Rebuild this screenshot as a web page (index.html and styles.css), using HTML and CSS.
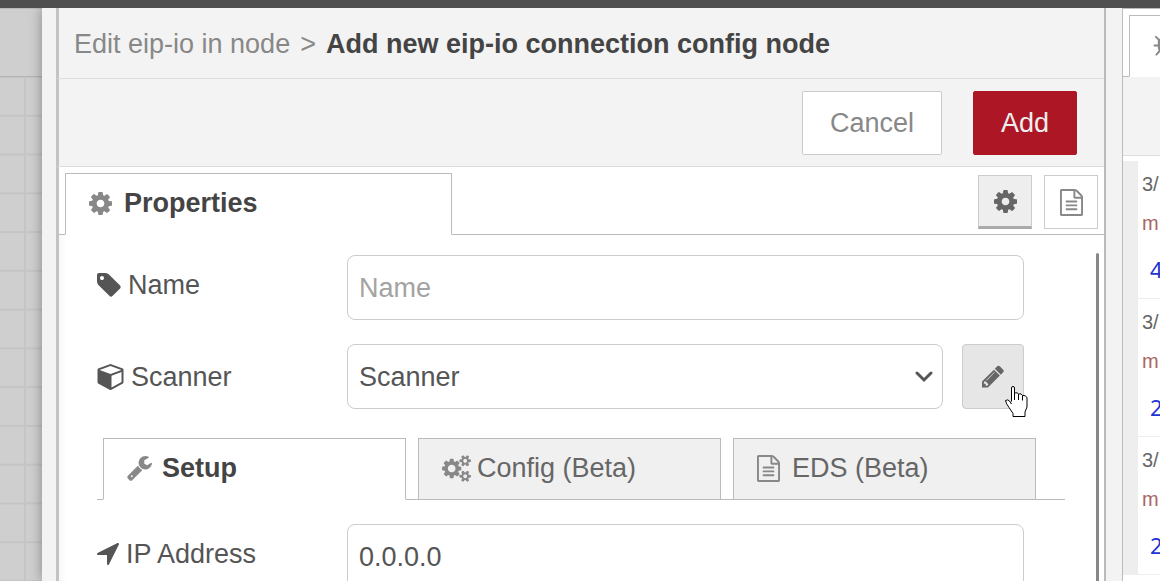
FILE: index.html
```html
<!DOCTYPE html>
<html lang="en">
<head>
  <meta charset="UTF-8">
  <meta name="viewport" content="width=device-width, initial-scale=1.0">
  <title>Add new eip-io connection config node</title>
  <link rel="stylesheet" href="styles.css">
</head>
<body>
  <!-- shared icons -->
  <svg class="sprite" aria-hidden="true">
    <symbol id="cog" viewBox="128 0 1536 1792"><path d="M1152 896q0-106-75-181t-181-75-181 75-75 181 75 181 181 75 181-75 75-181zm512-109v222q0 12-8 23t-20 13l-185 28q-19 54-39 91 35 50 107 138 10 12 10 25t-9 23q-27 37-99 108t-94 71q-12 0-26-9l-138-108q-44 23-91 38-16 136-29 186-7 28-36 28h-222q-14 0-24.5-8.5t-11.5-21.5l-28-184q-49-16-90-37l-141 107q-10 9-25 9-14 0-25-11-126-114-165-168-7-10-7-23 0-12 8-23 15-21 51-66.5t54-70.5q-27-50-41-99l-183-27q-13-2-21-12.5t-8-23.5v-222q0-12 8-23t19-13l186-28q14-46 39-92-40-57-107-138-10-12-10-24 0-10 9-23 26-36 98.5-107.5t94.5-71.5q13 0 26 10l138 107q44-23 91-38 16-136 29-186 7-28 36-28h222q14 0 24.5 8.5t11.5 21.5l28 184q49 16 90 37l142-107q9-9 24-9 13 0 25 10 129 119 165 170 7 8 7 22 0 12-8 23-15 21-51 66.5t-54 70.5q26 50 41 98l183 28q13 2 21 12.5t8 23.5z"/></symbol>
    <symbol id="file" viewBox="128 0 1536 1792"><path d="M1596 380q28 28 48 76t20 88v1152q0 40-28 68t-68 28h-1344q-40 0-68-28t-28-68v-1600q0-40 28-68t68-28h896q40 0 88 20t76 48zm-444-244v376h376q-10-29-22-41l-313-313q-12-12-41-22zm384 1528v-1024h-416q-40 0-68-28t-28-68v-416h-768v1536h1280zm-1024-864q0-14 9-23t23-9h704q14 0 23 9t9 23v64q0 14-9 23t-23 9h-704q-14 0-23-9t-9-23v-64zm736 224q14 0 23 9t9 23v64q0 14-9 23t-23 9h-704q-14 0-23-9t-9-23v-64q0-14 9-23t23-9h704zm0 256q14 0 23 9t9 23v64q0 14-9 23t-23 9h-704q-14 0-23-9t-9-23v-64q0-14 9-23t23-9h704z"/></symbol>
  </svg>

  <header class="topbar"></header>
  <div class="editor">
    <div class="workspace">
      <div class="workspace-tabs"></div>
      <div class="workspace-grid"></div>
    </div>

    <main class="tray">
      <h1 class="tray-title"><a href="#">Edit eip-io in node</a><span class="crumb-sep">&gt;</span>Add new eip-io connection config node</h1>
      <div class="tray-toolbar">
        <button class="btn" type="button">Cancel</button>
        <button class="btn btn-primary" type="button">Add</button>
      </div>
      <div class="tray-tabs">
        <button class="tab tab-active tab-properties" type="button"><span class="tab-icon"><svg class="icon"><use href="#cog"/></svg></span>Properties</button>
        <div class="tray-tools">
          <button class="tool tool-active" type="button" aria-label="Properties"><svg class="icon"><use href="#cog"/></svg></button>
          <button class="tool" type="button" aria-label="Description"><svg class="icon"><use href="#file"/></svg></button>
        </div>
      </div>

      <div class="tray-body">
        <form class="form">
          <div class="row">
            <label class="label label-input" for="name"><svg class="icon-label" viewBox="128 128 1536 1536"><path d="M576 448q0-53-37.5-90.5t-90.5-37.5-90.5 37.5-37.5 90.5 37.5 90.5 90.5 37.5 90.5-37.5 37.5-90.5zm1067 576q0 53-37 90l-491 492q-39 37-91 37-53 0-90-37l-715-716q-38-37-64.5-101t-26.5-117v-416q0-52 38-90t90-38h416q53 0 117 26.5t102 64.5l715 714q37 39 37 91z"/></svg>Name</label>
            <input class="field" id="name" type="text" placeholder="Name">
          </div>
          <div class="row">
            <label class="label" for="scanner"><svg class="icon-label icon-cube" viewBox="0 64 1664 1728"><path d="M896 1629l640-349v-636l-640 233v752zm-64-865l698-254-698-254-698 254zm832-252v768q0 35-18 65t-49 47l-704 384q-28 16-61 16t-61-16l-704-384q-31-17-49-47t-18-65v-768q0-40 23-73t61-47l704-256q22-8 44-8t44 8l704 256q38 14 61 47t23 73z"/></svg>Scanner</label>
            <div class="select">
              <select class="field" id="scanner"><option>Scanner</option></select>
              <svg class="chevron" viewBox="0 0 18 12"><path d="M2 2l7 7 7-7"/></svg>
            </div>
            <button class="edit" type="button" aria-label="Edit scanner">
              <svg class="icon" viewBox="128 128 1536 1536"><path d="M491 1536l91-91-235-235-91 91v107h128v128h107zm523-928q0-22-22-22-10 0-17 7l-542 542q-7 7-7 17 0 22 22 22 10 0 17-7l542-542q7-7 7-17zm-54-192l416 416-832 832h-416v-416zm683 96q0 53-37 90l-166 166-416-416 166-165q36-38 90-38 53 0 91 38l235 234q37 39 37 91z"/></svg>
              <svg class="pointer" viewBox="0 0 23 32"><path d="M6.500 15.500V2q0-1.500 1.500-1.500t1.500 1.500v5q3-1 4 1q3-1 4 1.500q3-.5 4.500 2v9.500l-2 5v4.500h-12v-3l-4-6q-3-4-3.500-7q2.500-1.500 4 .5l2 3M9.500 7v7M13.500 8v6M17.500 9.500v5"/></svg>
            </button>
          </div>
          <div class="form-tabs">
            <button class="tab tab-active" type="button"><span class="tab-icon"><svg class="icon icon-wrench" viewBox="64 128 1664 1664"><path d="M448 1472q0-26-19-45t-45-19-45 19-19 45 19 45 45 19 45-19 19-45zm644-420l-682 682q-37 37-90 37-52 0-91-37l-106-108q-38-36-38-90 0-53 38-91l681-681q39 98 114.500 173.500t173.500 114.500zm634-435q0 39-23 106-47 134-164.500 217.500t-258.500 83.500q-185 0-316.500-131.500t-131.500-316.500 131.500-316.500 316.500-131.500q58 0 121.500 16.500t107.500 46.500q16 11 16 28t-16 28l-293 169v224l193 107q5-3 79-48.500t135.500-81 70.500-35.500q15 0 23.500 10t8.500 25z"/></svg></span>Setup</button>
            <button class="tab" type="button"><span class="tab-icon"><svg class="icon icon-cogs" viewBox="0 0 1920 1792"><path d="M896 896q0-106-75-181t-181-75-181 75-75 181 75 181 181 75 181-75 75-181zm768 512q0-52-38-90t-90-38-90 38-38 90q0 53 37.500 90.500t90.500 37.500 90.500-37.500 37.500-90.500zm0-1024q0-52-38-90t-90-38-90 38-38 90q0 53 37.500 90.500t90.500 37.500 90.500-37.500 37.500-90.500zm-384 421v185q0 10-7 19.500t-16 10.500l-155 24q-11 35-32 76 34 48 90 115 7 11 7 20 0 12-7 19-23 30-82.500 89.500t-78.500 59.500q-11 0-21-7l-115-90q-37 19-77 31-11 108-23 155-7 24-30 24h-186q-11 0-20-7.500t-10-17.500l-23-153q-34-10-75-31l-118 89q-7 7-20 7-11 0-21-8-144-133-144-160 0-9 7-19 10-14 41-53t47-61q-23-44-35-82l-152-24q-10-1-17-9.500t-7-19.500v-185q0-10 7-19.500t16-10.500l155-24q11-35 32-76-34-48-90-115-7-11-7-20 0-12 7-20 22-30 82-89t79-59q11 0 21 7l115 90q34-18 77-32 11-108 23-154 7-24 30-24h186q11 0 20 7.500t10 17.500l23 153q34 10 75 31l118-89q8-7 20-7 11 0 21 8 144 133 144 160 0 8-7 19-12 16-42 54t-45 60q23 48 34 82l152 23q10 2 17 10.500t7 19.500zm640 533v140q0 16-149 31-12 27-30 52 51 113 51 138 0 4-4 7-122 71-124 71-8 0-46-47t-52-68q-20 2-30 2t-30-2q-14 21-52 68t-46 47q-2 0-124-71-4-3-4-7 0-25 51-138-18-25-30-52-149-15-149-31v-140q0-16 149-31 13-29 30-52-51-113-51-138 0-4 4-7 4-2 35-20t59-34 30-16q8 0 46 46.500t52 67.500q20-2 30-2t30 2q51-71 92-112l6-2q4 0 124 70 4 3 4 7 0 25-51 138 17 23 30 52 149 15 149 31zm0-1024v140q0 16-149 31-12 27-30 52 51 113 51 138 0 4-4 7-122 71-124 71-8 0-46-47t-52-68q-20 2-30 2t-30-2q-14 21-52 68t-46 47q-2 0-124-71-4-3-4-7 0-25 51-138-18-25-30-52-149-15-149-31v-140q0-16 149-31 13-29 30-52-51-113-51-138 0-4 4-7 4-2 35-20t59-34 30-16q8 0 46 46.500t52 67.500q20-2 30-2t30 2q51-71 92-112l6-2q4 0 124 70 4 3 4 7 0 25-51 138 17 23 30 52 149 15 149 31z"/></svg></span>Config (Beta)</button>
            <button class="tab" type="button"><span class="tab-icon"><svg class="icon"><use href="#file"/></svg></span>EDS (Beta)</button>
          </div>
          <div class="row">
            <label class="label label-input" for="address"><svg class="icon-label icon-arrow" viewBox="192 256 1408 1408"><path d="M1593 349l-640 1280q-17 35-57 35-5 0-15-2-22-5-35.500-22.500t-13.500-39.500v-576h-576q-22 0-39.500-13.500t-22.500-35.500 4-42 29-30l1280-640q13-7 29-7 27 0 45 19 15 14 18.500 34.500t-6.500 39.500z"/></svg>IP Address</label>
            <input class="field" id="address" type="text" value="0.0.0.0">
          </div>
        </form>
        <div class="scrollbar"></div>
      </div>
    </main>

    <div class="separator"></div>

    <aside class="sidebar">
      <div class="sidebar-tabs">
        <button class="sidebar-tab" type="button" aria-label="Debug"><svg class="icon-bug" viewBox="64 0 1664 1792"><path d="M1696 960q0 26-19 45t-45 19h-224q0 171-67 290l208 209q19 19 19 45t-19 45q-18 19-45 19t-45-19l-198-197q-5 5-15 13t-42 28.500-65 36.500-82 29-97 13v-896h-128v896q-51 0-101.500-13.500t-87-33-66-39-43.500-32.500l-15-14-183 207q-20 21-48 21-24 0-43-16-19-18-20.500-44.500t15.500-46.500l202-227q-58-114-58-274h-224q-26 0-45-19t-19-45 19-45 45-19h224v-294l-173-173q-19-19-19-45t19-45 45-19 45 19l173 173h844l173-173q19-19 45-19t45 19 19 45-19 45l-173 173v294h224q26 0 45 19t19 45zm-480-576h-640q0-133 93.500-226.500t226.500-93.500 226.500 93.500 93.500 226.500z"/></svg></button>
      </div>
      <div class="sidebar-toolbar"></div>
      <div class="messages">
        <div class="message"><div class="date">3/</div><div class="topic">m</div><div class="value">4</div></div>
        <div class="message"><div class="date">3/</div><div class="topic">m</div><div class="value">2</div></div>
        <div class="message"><div class="date">3/</div><div class="topic">m</div><div class="value">2</div></div>
      </div>
    </aside>
  </div>
</body>
</html>
```
FILE: styles.css
```css
*, *::before, *::after {
  box-sizing: border-box;
}

body {
  margin: 0;
  height: 100vh;
  display: flex;
  flex-direction: column;
  overflow: hidden;
  background: #fff;
  color: #555;
  font: 27px/32px "Liberation Sans", Arial, sans-serif;
}

button, input, select {
  margin: 0;
  font: inherit;
  color: inherit;
}

svg {
  display: block;
  flex: none;
  fill: currentColor;
}

.sprite {
  position: absolute;
  width: 0;
  height: 0;
}

.topbar {
  flex: none;
  height: 8px;
  background: #4f4f4f;
}

.editor {
  flex: 1;
  min-height: 0;
  display: flex;
}

/* dimmed flow canvas */
.workspace {
  flex: none;
  width: 42px;
  display: flex;
  flex-direction: column;
  background: #cfcfcf;
}

.workspace-tabs {
  height: 69px;
  border-top: 1px solid #bbb;
  border-bottom: 1px solid #b4b4b4;
}

.workspace-grid {
  flex: 1;
  background-image:
    linear-gradient(to left, #c5c5c5 2px, transparent 2px),
    linear-gradient(to top, #c5c5c5 2px, transparent 2px);
  background-position: 0 0, 0 1px;
  background-size: 26px 100%, 100% calc(100% / 13);
  background-repeat: no-repeat, repeat;
}

/* tray */
.tray {
  position: relative;
  flex: 1;
  min-width: 0;
  display: flex;
  flex-direction: column;
  border-left: 14px solid #f3f3f3;
  border-right: 2px solid #bbb;
  box-shadow: 0 0 12px rgba(0, 0, 0, 0.35);
  clip-path: inset(0 0 0 -16px);
}

.tray > * {
  border-left: 3px solid #c3c3c3;
}

.tray-title {
  flex: none;
  height: 71px;
  margin: 0;
  padding: 20px 15px 18px;
  border-bottom: 1px solid #ddd;
  background: #f3f3f3;
  color: #444;
  font-size: 27px;
  white-space: nowrap;
}

.tray-title a {
  color: #888;
  font-weight: normal;
  text-decoration: none;
}

.crumb-sep {
  margin: 0 10px;
  color: #888;
  font-weight: normal;
}

.tray-toolbar {
  flex: none;
  display: flex;
  justify-content: flex-end;
  gap: 31px;
  padding: 12px 27px 11px;
  border-bottom: 1px solid #ddd;
  background: #f3f3f3;
}

.btn {
  height: 64px;
  padding: 0 27px;
  border: 1px solid #ccc;
  border-radius: 2px;
  background: #fff;
  color: #888;
}

.btn-primary {
  border-color: #ad1625;
  background: #ad1625;
  color: #eee;
}

.tray-tabs, .form-tabs {
  display: flex;
  box-shadow: inset 0 -1px #bbb;
}

.tray-tabs {
  flex: none;
  align-items: flex-end;
  justify-content: space-between;
  height: 68px;
  padding: 0 6px;
  background-color: #fff;
}

.tab {
  display: flex;
  align-items: center;
  height: 62px;
  padding: 0 23px 2px;
  border: 1px solid #bbb;
  background: #f0f0f0;
  color: #666;
  white-space: nowrap;
}

.tab-active {
  border-bottom-color: #fff;
  background: #fff;
  color: #444;
  font-weight: bold;
}

.tab-properties {
  width: 387px;
}

.tab-icon {
  flex: none;
  width: 35px;
  color: #888;
}

.icon {
  width: 23px;
  height: 27px;
}

.icon-cogs {
  width: 29px;
}

.icon-wrench {
  width: 25px;
}

.tray-tools {
  display: flex;
  gap: 12px;
  margin-bottom: 6px;
}

.tool {
  width: 54px;
  height: 54px;
  display: grid;
  place-items: center;
  padding: 0;
  border: 1px solid #ccc;
  background: #fff;
  color: #888;
}

.tool-active {
  border-bottom: 3px solid #aaa;
  background: #eee;
  color: #666;
}

.tray-body {
  flex: 1;
  min-height: 0;
  display: flex;
  background: linear-gradient(to right, #f8f8f8, #fff 8px);
}

.form {
  flex: 1;
  min-width: 0;
  padding: 20px 31px 0 38px;
}

.row {
  display: flex;
  margin: 0 41px 24px 0;
}

.label {
  flex: none;
  width: 250px;
  display: flex;
  align-items: center;
  gap: 7px;
}

.label-input {
  padding-bottom: 6px;
}

.icon-label {
  width: 24px;
  height: 24px;
}

.icon-cube {
  width: 27px;
  height: 27px;
}

.icon-arrow {
  width: 22px;
  height: 22px;
}

.field {
  flex: 1;
  width: 100%;
  min-width: 0;
  height: 65px;
  padding: 1px 11px 0;
  border: 1px solid #ccc;
  border-radius: 8px;
  background: #fff;
  appearance: none;
}

.field::placeholder {
  color: #a3a3a3;
}

.select {
  position: relative;
  flex: 1;
}

.chevron {
  position: absolute;
  top: 27px;
  right: 10px;
  width: 18px;
  height: 12px;
  fill: none;
  stroke: #555;
  stroke-width: 3;
  stroke-linecap: round;
  pointer-events: none;
}

.edit {
  position: relative;
  width: 62px;
  height: 65px;
  display: grid;
  place-items: center;
  margin-left: 19px;
  padding: 0;
  border: 1px solid #ccc;
  border-radius: 4px;
  background: #e6e6e6;
  color: #666;
}

.edit .icon {
  width: 22px;
}

.pointer {
  position: absolute;
  right: -5px;
  bottom: -10px;
  width: 23px;
  height: 32px;
  fill: #fff;
  stroke: #000;
}

.form-tabs {
  gap: 12px;
  margin: 29px 0 24px;
  padding: 0 29px 0 6px;
}

.form-tabs .tab {
  flex: 1;
}

.scrollbar {
  flex: none;
  width: 3px;
  margin: 18px 5px 0 0;
  border-radius: 2px 2px 0 0;
  background: #888;
}

.separator {
  flex: none;
  width: 16px;
  background: #f3f3f3;
}

/* sidebar, cut off by the window */
.sidebar {
  flex: none;
  width: 38px;
  border-left: 1px solid #bbb;
  border-top: 1px solid #bbb;
  overflow: hidden;
}

.sidebar-tabs {
  display: flex;
  height: 68px;
  padding: 6px 0 0 6px;
  box-shadow: inset 0 -1px #bbb;
}

.sidebar-tab {
  flex: none;
  width: 120px;
  padding: 0 0 4px 23px;
  border: 1px solid #bbb;
  border-bottom-color: #fff;
  background: #fff;
  color: #888;
}

.icon-bug {
  width: 25px;
  height: 27px;
}

.sidebar-toolbar {
  height: 79px;
  border-bottom: 1px solid #ddd;
  background: #f3f3f3;
}

.messages {
  padding-top: 5px;
}

.message {
  height: 138px;
  padding: 11px 0 0 4px;
  border-left: 15px solid #eee;
  border-bottom: 1px solid #eee;
  font-size: 20px;
  line-height: 24px;
}

.date {
  color: #666;
}

.topic {
  margin: 15px 0 22px;
  color: #a66;
}

.value {
  padding-left: 8px;
  color: #2033d6;
  font-family: "Noto Sans", sans-serif;
  font-size: 22px;
}
```
